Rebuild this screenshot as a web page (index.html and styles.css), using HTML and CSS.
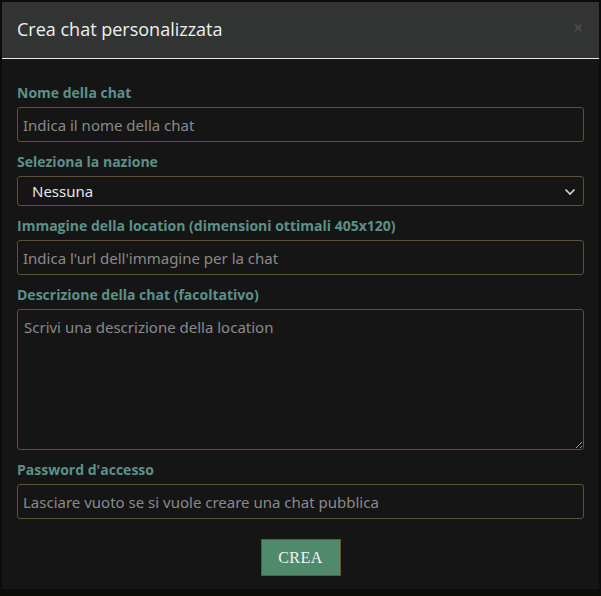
FILE: index.html
```html
<!DOCTYPE html>
<html lang="it">
<head>
<meta charset="utf-8">
<title>Crea chat personalizzata</title>
<link rel="stylesheet" href="styles.css">
</head>
<body>
<div class="modal">
  <div class="modal-header">
    <h1 class="modal-title">Crea chat personalizzata</h1>
    <span class="close">&times;</span>
  </div>
  <form class="modal-body">
    <label class="field-label">Nome della chat</label>
    <input class="control" type="text" placeholder="Indica il nome della chat">

    <label class="field-label">Seleziona la nazione</label>
    <div class="select-wrap">
      <select class="control select">
        <option>Nessuna</option>
      </select>
      <svg class="chevron" width="12" height="8" viewBox="0 0 12 8"><path d="M1.5 1.5 L6 6 L10.5 1.5" fill="none" stroke="#d8d8d8" stroke-width="1.6"/></svg>
    </div>

    <label class="field-label">Immagine della location (dimensioni ottimali 405x120)</label>
    <input class="control" type="text" placeholder="Indica l'url dell'immagine per la chat">

    <label class="field-label">Descrizione della chat (facoltativo)</label>
    <textarea class="control textarea" placeholder="Scrivi una descrizione della location"></textarea>

    <label class="field-label">Password d'accesso</label>
    <input class="control" type="text" placeholder="Lasciare vuoto se si vuole creare una chat pubblica">

    <div class="actions">
      <button type="button" class="btn">CREA</button>
    </div>
  </form>
</div>
</body>
</html>
```

FILE: styles.css
```css
html, body {
  margin: 0;
  padding: 0;
  background: #0b0b0a;
  color-scheme: dark;
}
body {
  padding: 2px 1px 0 2px;
  font-family: "Open Sans", "Noto Sans", sans-serif;
}
.modal {
  width: 597px;
  background: #151515;
}
.modal-header {
  background: #323433;
  border-bottom: 1px solid #e8e8e8;
  display: flex;
  align-items: center;
  justify-content: space-between;
  padding: 0 16px 0 15px;
  box-sizing: border-box;
  height: 57px;
}
.modal-title {
  margin: 0;
  font-size: 18px;
  font-weight: 400;
  color: #f0f0f0;
  padding-bottom: 2px;
}
.close {
  color: #4a4b4a;
  font-size: 17px;
  line-height: 1;
  margin-top: -6px;
  font-weight: 700;
}
.modal-body {
  display: flex;
  flex-direction: column;
  padding: 24px 15px 13px 15px;
}
.field-label {
  font-size: 14px;
  font-weight: 700;
  color: #5c9189;
  line-height: 20px;
  margin-bottom: 4px;
}
.control {
  box-sizing: border-box;
  width: 100%;
  height: 35px;
  background: #151515;
  border: 1px solid #5e4f35;
  border-radius: 3px;
  padding: 0 5px;
  font-family: "Noto Sans", sans-serif;
  font-size: 15px;
  color: #cfcfcf;
  margin: 0 0 10px 0;
  outline: none;
}
.control::placeholder {
  color: #8a8a8a;
}
.select-wrap {
  position: relative;
}
.select {
  height: 30px;
  appearance: none;
  -webkit-appearance: none;
  padding-left: 14px;
  color: #e6e6e6;
}
.chevron {
  position: absolute;
  right: 8px;
  top: 12px;
}
.textarea {
  height: 141px;
  padding: 7px 6px;
  resize: vertical;
}
.actions {
  display: flex;
  justify-content: center;
  padding-top: 10px;
}
.btn {
  width: 80px;
  height: 37px;
  background: #4f8a6c;
  border: 1px solid #6b5535;
  color: #f4f4f4;
  font-family: "Liberation Serif", serif;
  font-size: 16px;
  letter-spacing: 0.5px;
  cursor: pointer;
}
```
